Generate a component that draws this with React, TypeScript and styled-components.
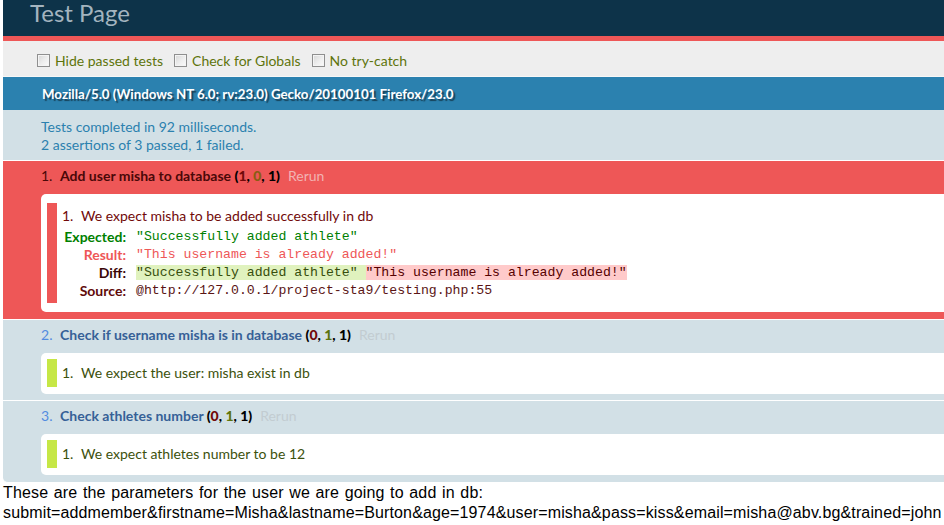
import React from 'react';
import styled, { createGlobalStyle } from 'styled-components';

const GlobalStyle = createGlobalStyle`
  html, body { margin: 0; padding: 0; background: #fff; }
  body { font-family: "Liberation Sans", Arial, sans-serif; font-size: 16px; color: #000; }
`;

const qunitFont = `font-family: Lato, "Open Sans", sans-serif;`;

const Page = styled.div`
  padding-left: 3px;
`;

const Header = styled.h1`
  margin: 0;
  height: 24px;
  padding: 1px 0 11px 27px;
  background: #0d3349;
  color: #a3b4bf;
  ${qunitFont}
  font-size: 24px;
  line-height: 24px;
  font-weight: 400;
`;

const Banner = styled.div`
  height: 5px;
  background: #ee5757;
`;

const Toolbar = styled.div`
  display: flex;
  align-items: center;
  box-sizing: border-box;
  height: 36px;
  padding: 4px 0 0 34px;
  background: #eee;
  border-bottom: 1px solid #f7f7f7;
  color: #5e740b;
  ${qunitFont}
  font-size: 14px;
`;

const Option = styled.label`
  display: flex;
  align-items: center;
  gap: 5px;
  margin-right: 11px;
`;

const Box = styled.span`
  display: inline-block;
  box-sizing: border-box;
  width: 13px;
  height: 13px;
  border: 1px solid #8f8f8f;
  background: linear-gradient(135deg, #d6d6d6 0%, #eeeeee 55%, #fbfbfb 100%);
  box-shadow: inset 0 0 0 1px #f4f4f4;
`;

const UserAgent = styled.h2`
  margin: 0;
  height: 33px;
  padding: 1px 0 0 39px;
  box-sizing: border-box;
  background: #2b81af;
  color: #fff;
  text-shadow: rgba(0, 0, 0, 0.5) 2px 2px 1px;
  ${qunitFont}
  font-size: 13.3px;
  font-weight: 700;
  line-height: 32px;
`;

const TestResult = styled.p`
  margin: 0;
  padding: 8px 0 6px 38px;
  background: #d2e0e6;
  border-bottom: 1px solid #fff;
  color: #2b81af;
  ${qunitFont}
  font-size: 14px;
  line-height: 18px;
`;

const Tests = styled.ol`
  list-style: none;
  margin: 0;
  padding: 0;
  ${qunitFont}
  font-size: 14px;
`;

const TestItem = styled.li<{ $fail?: boolean }>`
  padding: 5px 0 6.5px 38px;
  background: ${p => (p.$fail ? '#ee5757' : '#d2e0e6')};
  border-bottom: 1px solid #fff;
  &:last-child { border-radius: 0 0 0 5px; }
`;

const TestTitle = styled.div<{ $fail?: boolean }>`
  display: flex;
  align-items: baseline;
  line-height: 20px;
  color: ${p => (p.$fail ? '#4a0808' : '#528ce0')};
`;

const Num = styled.span`
  width: 19px;
  flex-shrink: 0;
`;

const Name = styled.strong<{ $fail?: boolean }>`
  font-weight: 700;
  color: ${p => (p.$fail ? '#4a0808' : '#366097')};
  white-space: pre;
`;

const CountsGroup = styled.b`
  color: #000;
`;

const Count = styled.b<{ $tone: 'failed' | 'passed' | 'passedOnRed' }>`
  color: ${p => (p.$tone === 'failed' ? '#710909' : p.$tone === 'passed' ? '#5e740b' : '#8a5d12')};
`;

const Rerun = styled.a<{ $fail?: boolean }>`
  margin-left: 8px;
  color: ${p => (p.$fail ? '#f2b3b3' : '#c2ccd1')};
  text-decoration: none;
`;

const Assertions = styled.ol<{ $fail?: boolean }>`
  list-style: none;
  margin: 8px 0 0;
  padding: ${p => (p.$fail ? '9px 0 9px 6px' : '6px 0 7px 6px')};
  background: #fff;
  border-radius: 5px 0 0 5px;
`;

const Assertion = styled.li<{ $fail?: boolean }>`
  padding: ${p => (p.$fail ? '4px 5px 3px' : '5px')};
  border-left: 10px solid ${p => (p.$fail ? '#ee5757' : '#c6e746')};
  color: ${p => (p.$fail ? '#710909' : '#3c510c')};
  line-height: 18px;
`;

const Message = styled.div`
  display: flex;
`;

const Table = styled.table`
  border-collapse: collapse;
  margin-top: 3px;
  line-height: 18px;
`;

const Th = styled.th<{ $color: string }>`
  width: 64px;
  text-align: right;
  vertical-align: top;
  padding: 0 10px 0 0;
  font-weight: 700;
  white-space: nowrap;
  color: ${p => p.$color};
`;

const Td = styled.td`
  padding: 0;
  vertical-align: top;
`;

const Pre = styled.pre<{ $color: string }>`
  margin: 0;
  font-family: "Liberation Mono", "Courier New", monospace;
  font-size: 13.2px;
  line-height: 18px;
  color: ${p => p.$color};
`;

const Del = styled.del`
  background: #e0f2be;
  color: #374e0c;
  text-decoration: none;
`;

const Ins = styled.ins`
  background: #ffcaca;
  color: #500;
  text-decoration: none;
`;

const Note = styled.div`
  line-height: 20px;
  letter-spacing: 0.14px;
  word-spacing: 1px;
  white-space: nowrap;
`;

type Counts = [number, number, number];

const CountsLabel = ({ counts, fail }: { counts: Counts; fail?: boolean }) => (
  <>
    {' '}
    <CountsGroup>
      (<Count $tone="failed">{counts[0]}</Count>, <Count $tone={fail ? 'passedOnRed' : 'passed'}>{counts[1]}</Count>,{' '}
      {counts[2]})
    </CountsGroup>
  </>
);

const PassTest = ({ n, name, counts, message }: { n: number; name: string; counts: Counts; message: string }) => (
  <TestItem>
    <TestTitle>
      <Num>{n}.</Num>
      <Name>
        {name}
        <CountsLabel counts={counts} />
      </Name>
      <Rerun href="#">Rerun</Rerun>
    </TestTitle>
    <Assertions>
      <Assertion>
        <Message>
          <Num>1.</Num>
          {message}
        </Message>
      </Assertion>
    </Assertions>
  </TestItem>
);

export default function App() {
  return (
    <Page>
      <GlobalStyle />
      <Header>Test Page</Header>
      <Banner />
      <Toolbar>
        <Option>
          <Box />
          Hide passed tests
        </Option>
        <Option>
          <Box />
          Check for Globals
        </Option>
        <Option>
          <Box />
          No try-catch
        </Option>
      </Toolbar>
      <UserAgent>Mozilla/5.0 (Windows NT 6.0; rv:23.0) Gecko/20100101 Firefox/23.0</UserAgent>
      <TestResult>
        Tests completed in 92 milliseconds.
        <br />2 assertions of 3 passed, 1 failed.
      </TestResult>
      <Tests>
        <TestItem $fail>
          <TestTitle $fail>
            <Num>1.</Num>
            <Name $fail>
              Add user misha to database
              <CountsLabel counts={[1, 0, 1]} fail />
            </Name>
            <Rerun $fail href="#">
              Rerun
            </Rerun>
          </TestTitle>
          <Assertions $fail>
            <Assertion $fail>
              <Message>
                <Num>1.</Num>
                We expect misha to be added successfully in db
              </Message>
              <Table>
                <tbody>
                  <tr>
                    <Th $color="#008000">Expected:</Th>
                    <Td>
                      <Pre $color="#008000">"Successfully added athlete"</Pre>
                    </Td>
                  </tr>
                  <tr>
                    <Th $color="#ee5757">Result:</Th>
                    <Td>
                      <Pre $color="#ee5757">"This username is already added!"</Pre>
                    </Td>
                  </tr>
                  <tr>
                    <Th $color="#3a0707">Diff:</Th>
                    <Td>
                      <Pre $color="#710909">
                        <Del>"Successfully added athlete" </Del>
                        <Ins>"This username is already added!"</Ins>
                      </Pre>
                    </Td>
                  </tr>
                  <tr>
                    <Th $color="#610a0a">Source:</Th>
                    <Td>
                      <Pre $color="#5a1414">@http://127.0.0.1/project-sta9/testing.php:55</Pre>
                    </Td>
                  </tr>
                </tbody>
              </Table>
            </Assertion>
          </Assertions>
        </TestItem>
        <PassTest n={2} name="Check if username misha is in database" counts={[0, 1, 1]} message="We expect the user: misha exist in db" />
        <PassTest n={3} name="Check athletes number" counts={[0, 1, 1]} message="We expect athletes number to be 12" />
      </Tests>
      <Note>These are the parameters for the user we are going to add in db:</Note>
      <Note>submit=addmember&amp;firstname=Misha&amp;lastname=Burton&amp;age=1974&amp;user=misha&amp;pass=kiss&amp;email=misha@abv.bg&amp;trained=john</Note>
    </Page>
  );
}
